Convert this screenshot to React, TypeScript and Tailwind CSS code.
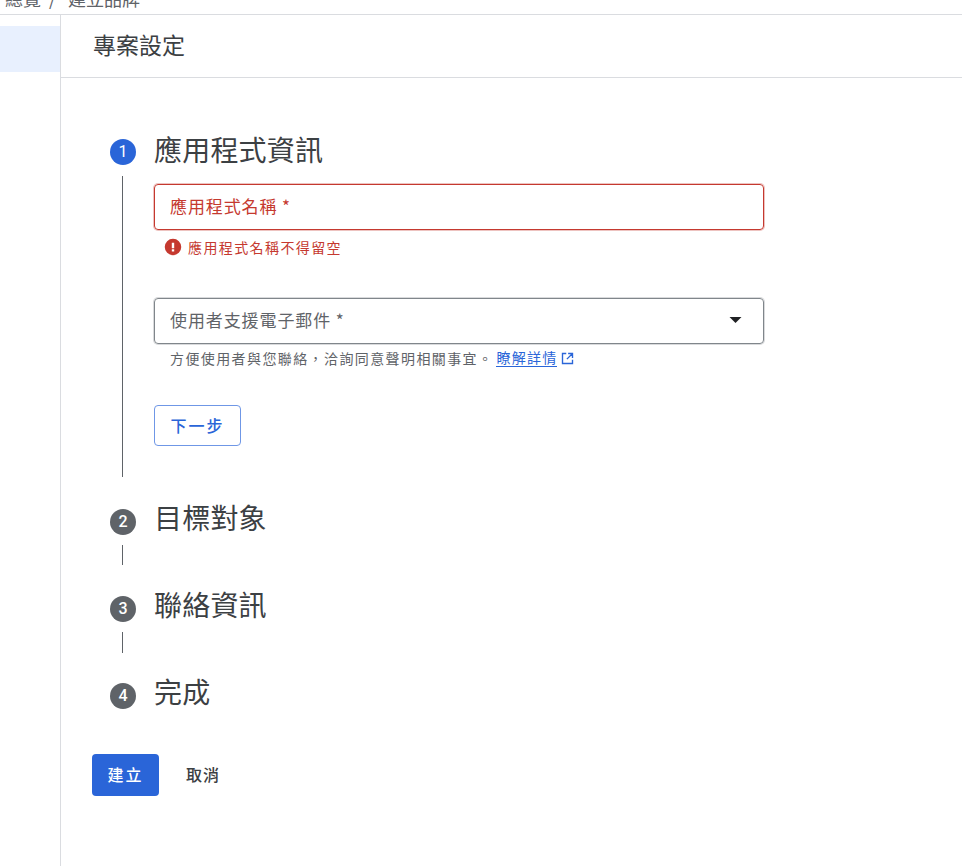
import React from "react";

const font = { fontFamily: '"Noto Sans CJK TC", Roboto, sans-serif' };

function Circle({ n, active }: { n: number; active?: boolean }) {
  return (
    <div
      className={`flex h-[26px] w-[26px] shrink-0 items-center justify-center rounded-full text-[16px] text-white ${active ? "bg-[#2a65d8] font-normal" : "bg-[#5f6368] font-medium"}`}
      style={{ fontFamily: "Roboto, sans-serif" }}
    >
      {n}
    </div>
  );
}

function MiniStep({ n, title, line }: { n: number; title: string; line: number }) {
  return (
    <div className="flex gap-[18px]">
      <div className="flex w-[26px] flex-col items-center">
        <Circle n={n} />
        {line === 20 && <div className="mr-px mt-[10px] mb-[30px] h-[20px] w-px bg-[#5f6368]" />}
        {line === 21 && <div className="mr-px mt-[10px] mb-[30px] h-[21px] w-px bg-[#5f6368]" />}
      </div>
      <div className="-mt-[12px] h-[36px] text-[28px] leading-[40px] tracking-[0.2px] text-[#3c4043]">{title}</div>
    </div>
  );
}

export default function App() {
  return (
    <div className="flex h-[866px] w-[962px] flex-col overflow-hidden bg-white" style={font}>
      <div className="h-[15px] shrink-0 overflow-hidden border-b border-[#dadce0] pl-[5px]">
        <div className="-mt-[14px] flex h-[24px] items-center text-[18px] leading-[24px] text-[#5f6368]">
          <span>總覽</span>
          <span className="ml-[8px] mr-[12px]">/</span>
          <span>建立品牌</span>
        </div>
      </div>
      <div className="flex min-h-0 flex-1">
        <aside className="w-[61px] shrink-0 border-r border-[#dadce0] pt-[11px]">
          <div className="h-[46px] bg-[#e8f0fe]" />
        </aside>
        <main className="min-w-0 flex-1">
          <header className="flex h-[63px] items-center border-b border-[#dadce0] pb-[3px] pl-[32px] text-[23px] text-[#3c4043]">
            專案設定
          </header>
          <div className="pl-[49px] pt-[61px]">
            <div className="flex gap-[18px]">
              <div className="flex w-[26px] flex-col items-center">
                <Circle n={1} active />
                <div className="mr-px mt-[11px] w-px flex-1 bg-[#5f6368]" />
              </div>
              <div className="pb-[31px]">
                <div className="-mt-[10px] h-[36px] text-[28px] leading-[40px] tracking-[0.2px] text-[#3c4043]">應用程式資訊</div>
                <div className="mt-[19px] w-[610px]">
                  <div className="flex h-[46px] items-center rounded-[4px] border border-[#c5392f] pb-[2px] pl-[15px] text-[17px] tracking-[0.9px] text-[#c5392f] shadow-[0_0_0_1px_rgba(197,57,47,0.3)]">
                    應用程式名稱 *
                  </div>
                  <div className="mt-[6px] flex h-[22px] items-center pl-[10px] text-[14px] tracking-[1.4px] text-[#c5392f]">
                    <svg width="18" height="18" viewBox="0 0 24 24" className="mr-[6px] shrink-0" fill="#c5392f">
                      <path d="M12 1a11 11 0 1 0 0 22 11 11 0 0 0 0-22zM13.6 13.6h-3.2V6.2h3.2zM13.6 18h-3.2v-3h3.2z" />
                    </svg>
                    應用程式名稱不得留空
                  </div>
                  <div className="mt-[40px] flex h-[46px] items-center justify-between rounded-[4px] border border-[#80868b] pb-[2px] pl-[15px] pr-[21px] text-[17px] tracking-[0.9px] text-[#5f6368] shadow-[0_0_0_1px_rgba(128,134,139,0.3)]">
                    <span>使用者支援電子郵件 *</span>
                    <svg width="13" height="6" viewBox="0 0 14 7" fill="#202124">
                      <path d="M0 0h14L7 7z" />
                    </svg>
                  </div>
                  <div className="mt-[4px] flex h-[20px] items-center pl-[16px] text-[14px] tracking-[1.4px] text-[#5f6368]">
                    <span>方便使用者與您聯絡，洽詢同意聲明相關事宜。</span>
                    <span className="ml-[3px] border-b border-[#2a65d8] text-[14px] leading-[17px] tracking-[1.25px] text-[#2a65d8]">瞭解詳情</span>
                    <svg width="15" height="15" viewBox="0 0 24 24" className="ml-[3px]" fill="none" stroke="#2a65d8" strokeWidth="2.2">
                      <path d="M10 4H4v16h16v-6M13 4h7v7M20 4l-9 9" />
                    </svg>
                  </div>
                  <button className="mt-[37px] flex h-[41px] w-[87px] items-center justify-center rounded-[4px] border border-[#6f97e6] pb-[2px] text-[16px] font-medium tracking-[2px] text-[#2a65d8]">
                    下一步
                  </button>
                </div>
              </div>
            </div>
            <div className="mt-[32px]">
              <MiniStep n={2} title="目標對象" line={20} />
              <div className="mt-[1px]">
                <MiniStep n={3} title="聯絡資訊" line={21} />
              </div>
              <MiniStep n={4} title="完成" line={0} />
            </div>
          </div>
          <div className="mt-[45px] flex items-center pl-[31px]">
            <button className="h-[42px] w-[67px] rounded-[4px] bg-[#2a65d8] pb-[2px] text-[16px] font-medium tracking-[2px] text-white">建立</button>
            <button className="ml-[27px] pb-[2px] text-[16px] font-medium tracking-[1px] text-[#3c4043]">取消</button>
          </div>
        </main>
      </div>
    </div>
  );
}
